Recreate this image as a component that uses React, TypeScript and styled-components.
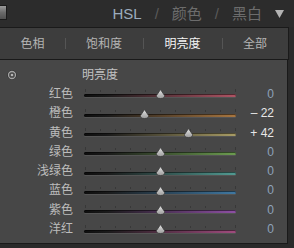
import React from 'react';
import styled, { createGlobalStyle } from 'styled-components';

interface Channel {
  label: string;
  value: number;
  color: string;
}

const channels: Channel[] = [
  { label: '红色', value: 0, color: '#ae5464' },
  { label: '橙色', value: -22, color: '#a87640' },
  { label: '黄色', value: 42, color: '#a89c66' },
  { label: '绿色', value: 0, color: '#6c9c50' },
  { label: '浅绿色', value: 0, color: '#529a92' },
  { label: '蓝色', value: 0, color: '#4078a2' },
  { label: '紫色', value: 0, color: '#8e50a4' },
  { label: '洋红', value: 0, color: '#a04c7e' },
];

const tabs = ['色相', '饱和度', '明亮度', '全部'];

/** 明亮度パネル */
const App: React.FC = () => {
  return (
    <Root>
      <GlobalStyle />
      <Header>
        <Switch />
        <Modes>
          <Mode active>HSL</Mode>
          <Slash>/</Slash>
          <Mode>颜色</Mode>
          <Slash>/</Slash>
          <Mode>黑白</Mode>
          <svg width="9" height="8" viewBox="0 0 9 8">
            <polygon points="0,0 9,0 4.5,8" fill="#b4b4b4" />
          </svg>
        </Modes>
      </Header>

      <TabBar>
        {tabs.map((t, i) => (
          <Tab key={t} active={t === '明亮度'} first={i === 0}>
            {t}
          </Tab>
        ))}
      </TabBar>

      <Panel>
        <Row>
          <IconCell>
            <svg width="10" height="10" viewBox="0 0 10 10">
              <circle cx="5" cy="5" r="3.9" fill="none" stroke="#2e2e2e" strokeWidth="1.6" />
              <circle cx="5" cy="5" r="3.5" fill="none" stroke="#a4a4a4" strokeWidth="1.3" />
              <circle cx="5" cy="5" r="1.3" fill="#b4b4b4" />
            </svg>
          </IconCell>
          <Title>明亮度</Title>
        </Row>
        {channels.map((c) => (
          <Row key={c.label}>
            <Label>{c.label}</Label>
            <Slider>
              <Ticks>
                {Array.from({ length: 11 }).map((_, i) => (
                  <Tick key={i} tall={i === 0 || i === 10} />
                ))}
              </Ticks>
              <Track color={c.color} />
              <Thumb style={{ left: `calc(${50 + c.value * 0.45}% - 4.5px)` }}>
                <svg width="9" height="10" viewBox="0 0 9 10">
                  <defs>
                    <linearGradient id="tg" x1="0" y1="0" x2="0" y2="1">
                      <stop offset="0" stopColor="#e4e4e4" />
                      <stop offset="1" stopColor="#9c9c9c" />
                    </linearGradient>
                  </defs>
                  <path
                    d="M4.5 0.5 L8.5 6.5 Q8.8 9.5 4.5 9.5 Q0.2 9.5 0.5 6.5 Z"
                    fill="url(#tg)"
                    stroke="#3a3a3a"
                    strokeWidth="0.8"
                  />
                </svg>
              </Thumb>
            </Slider>
            <Value changed={c.value !== 0}>
              {c.value === 0 ? '0' : c.value > 0 ? `+ ${c.value}` : `– ${-c.value}`}
            </Value>
          </Row>
        ))}
      </Panel>
    </Root>
  );
};

// styles
const GlobalStyle = createGlobalStyle`
  html, body {
    margin: 0;
    padding: 0;
    background: #2a2a2a;
  }
  body {
    font-family: "Liberation Sans", "Noto Sans CJK SC", sans-serif;
  }
`;

const Root = styled.div`
  width: 294px;
  height: 248px;
  overflow: hidden;
  display: flex;
  flex-direction: column;
  background: #2a2a2a;
`;

const Header = styled.div`
  height: 27px;
  display: flex;
  align-items: center;
  justify-content: space-between;
  padding-right: 10px;
  background: #2c2c2c;
`;

const Switch = styled.div`
  width: 7px;
  height: 15px;
  margin-top: -2px;
  box-sizing: border-box;
  border: 1px solid #1a1a1a;
  border-left: none;
  background: linear-gradient(#9a9a9a, #6a6a6a 50%, #505050);
`;

const Modes = styled.div`
  display: flex;
  align-items: center;
  gap: 13px;
  font-size: 15px;
  line-height: 18px;
`;

const Mode = styled.span<{ active?: boolean }>`
  color: ${(p) => (p.active ? '#9cacbe' : '#6c6c6c')};
`;

const Slash = styled.span`
  color: #5a5a5a;
`;

const TabBar = styled.div`
  width: 288px;
  height: 31px;
  display: grid;
  grid-template-columns: 65px 78px 79px 1fr;
  background: #3d3d3d;
  border-top: 1px solid #1a1a1a;
  border-bottom: 1px solid #1a1a1a;
  border-right: 1px solid #1a1a1a;
  align-self: flex-start;
`;

const Tab = styled.div<{ active?: boolean; first?: boolean }>`
  position: relative;
  display: flex;
  align-items: center;
  justify-content: center;
  font-size: 12px;
  line-height: 14px;
  color: ${(p) => (p.active ? '#f4f4f4' : '#b4b4b4')};

  &::before {
    content: '';
    display: ${(p) => (p.first ? 'none' : 'block')};
    position: absolute;
    left: 0;
    top: 10px;
    width: 1px;
    height: 11px;
    background: #555555;
  }
`;

const Panel = styled.div`
  width: 287px;
  height: 178px;
  padding-top: 5px;
  background: #474747;
  border-right: 1px solid #1a1a1a;
  border-bottom: 1px solid #1a1a1a;
`;

const Row = styled.div`
  height: 19.3px;
  display: grid;
  grid-template-columns: 84px 152px 38px;
  align-items: center;
`;

const IconCell = styled.div`
  display: flex;
  align-items: center;
  padding-left: 7px;
  height: 100%;
`;

const Title = styled.div`
  font-size: 12px;
  line-height: 14px;
  color: #c2c2c2;
  margin-left: -2px;
`;

const Label = styled.div`
  text-align: right;
  padding-right: 11px;
  font-size: 12px;
  line-height: 14px;
  color: #bcbcbc;
`;

const Slider = styled.div`
  position: relative;
  height: 100%;
  display: flex;
  flex-direction: column;
  justify-content: center;
  padding-bottom: 1px;
  box-sizing: border-box;
`;

const Ticks = styled.div`
  display: flex;
  justify-content: space-between;
  align-items: flex-end;
  height: 3px;
  margin-bottom: 2px;
  padding: 0 0 0 1px;
`;

const Tick = styled.div<{ tall?: boolean }>`
  width: 1px;
  height: ${(p) => (p.tall ? 3 : 2)}px;
  background: #383838;
`;

const Track = styled.div<{ color: string }>`
  height: 3px;
  border-radius: 2px;
  background: linear-gradient(to right, #0e0e0e 0%, #1a1a1a 15%, ${(p) => p.color} 100%);
  box-shadow: 0 1px 0 rgba(255, 255, 255, 0.08), inset 0 1px 0 rgba(0, 0, 0, 0.5);
`;

const Thumb = styled.div`
  position: absolute;
  top: 5px;
  width: 9px;
  height: 10px;
  display: flex;
`;

const Value = styled.div<{ changed?: boolean }>`
  text-align: right;
  font-size: 12px;
  line-height: 14px;
  color: ${(p) => (p.changed ? '#e8e8e8' : '#8ea2ba')};
`;

export default App;
